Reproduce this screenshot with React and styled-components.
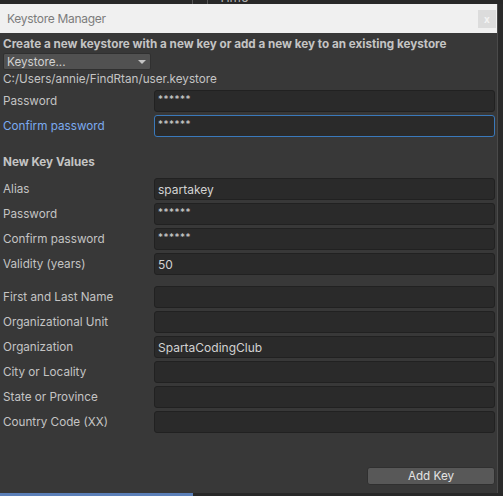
import styled, { createGlobalStyle } from 'styled-components';

const GlobalStyle = createGlobalStyle`
  * { box-sizing: border-box; }
  html, body { margin: 0; padding: 0; background: #282828; }
  body { font-family: Inter, "Noto Sans", sans-serif; }
`;

const Page = styled.div`
  width: 503px;
  height: 496px;
  display: flex;
  flex-direction: column;
  background: #282828;
  overflow: hidden;
`;

const TopStrip = styled.div`
  height: 4px;
  overflow: hidden;
  display: flex;
  align-items: flex-end;
  padding-left: 192px;
  gap: 14px;
`;

const StripLine = styled.span`
  width: 1px;
  height: 4px;
  background: #555;
`;

const StripText = styled.span`
  font-size: 13px;
  line-height: 13px;
  color: #b0b0b0;
  margin-top: -9px;
  margin-left: -4px;
  align-self: flex-start;
`;

const Middle = styled.div`
  flex: 1;
  display: flex;
`;

const Window = styled.div`
  width: 498px;
  display: flex;
  flex-direction: column;
  border-right: 1px solid #4a4a4a;
  background: #383838;
`;

const TitleBar = styled.div`
  height: 29px;
  background: #f0f0f0;
  display: flex;
  align-items: center;
  justify-content: space-between;
  padding: 0 1px 0 7px;
`;

const Title = styled.span`
  font-size: 12px;
  letter-spacing: -0.3px;
  color: #7c7c7c;
`;

const CloseBox = styled.div`
  width: 18px;
  height: 18px;
  background: #dcdcdc;
  color: #f4f4f4;
  font-size: 10px;
  font-weight: 700;
  display: flex;
  align-items: center;
  justify-content: center;
`;

const Body = styled.div`
  flex: 1;
  display: flex;
  flex-direction: column;
  padding: 4px 2px 0 3px;
  color: #c4c4c4;
  font-size: 11.7px;
`;

const Heading = styled.div`
  font-weight: 700;
  line-height: 14px;
  margin-top: ${p => p.$top || 0}px;
  margin-bottom: ${p => p.$bottom || 0}px;
`;

const Dropdown = styled.div`
  width: 148px;
  height: 17px;
  margin-top: 2px;
  background: #515151;
  border: 1px solid #303030;
  border-radius: 2px;
  display: flex;
  align-items: center;
  justify-content: space-between;
  padding: 0 4px 0 3px;
  color: #d2d2d2;
`;

const Caret = styled.span`
  width: 0;
  height: 0;
  border-left: 4px solid transparent;
  border-right: 4px solid transparent;
  border-top: 4px solid #c4c4c4;
`;

const PathText = styled.div`
  line-height: 15px;
  margin-top: 2px;
  margin-bottom: 3px;
  color: #c4c4c4;
`;

const Rows = styled.div`
  display: flex;
  flex-direction: column;
  gap: 3px;
  margin-top: ${p => p.$top || 0}px;
`;

const Row = styled.div`
  display: grid;
  grid-template-columns: 151px 1fr;
  align-items: center;
  height: 22px;
`;

const Label = styled.span`
  color: ${p => (p.$active ? '#7babf0' : '#c4c4c4')};
`;

const Field = styled.div`
  height: 22px;
  background: #2a2a2a;
  border: 1px solid ${p => (p.$active ? '#3a79bb' : '#212121')};
  border-radius: 3px;
  padding: 0 3px;
  display: flex;
  align-items: center;
  color: #d2d2d2;
  font-size: ${p => (p.$secret ? '10px' : '12px')};
  letter-spacing: ${p => (p.$secret ? '0.5px' : '0')};
  padding-bottom: ${p => (p.$secret ? '5px' : '0')};
`;

const Footer = styled.div`
  flex: 1;
  display: flex;
  justify-content: flex-end;
  align-items: flex-end;
  padding-bottom: 8px;
`;

const Button = styled.div`
  width: 128px;
  height: 18px;
  background: #585858;
  border: 1px solid #303030;
  border-radius: 3px;
  color: #e4e4e4;
  display: flex;
  align-items: center;
  justify-content: center;
`;

const Gutter = styled.div`
  flex: 1;
  background: #2a2a2a;
`;

const BottomStrip = styled.div`
  height: 3px;
  display: flex;
`;

const BlueBar = styled.div`
  width: 193px;
  background: #5b7fb8;
`;

const keystoreRows = [
  { label: 'Password', value: '******', secret: true },
  { label: 'Confirm password', value: '******', secret: true, active: true },
];

const keyRows = [
  { label: 'Alias', value: 'spartakey' },
  { label: 'Password', value: '******', secret: true },
  { label: 'Confirm password', value: '******', secret: true },
  { label: 'Validity (years)', value: '50' },
];

const ownerRows = [
  { label: 'First and Last Name', value: '' },
  { label: 'Organizational Unit', value: '' },
  { label: 'Organization', value: 'SpartaCodingClub' },
  { label: 'City or Locality', value: '' },
  { label: 'State or Province', value: '' },
  { label: 'Country Code (XX)', value: '' },
];

function FieldRow({ row }) {
  return (
    <Row>
      <Label $active={row.active}>{row.label}</Label>
      <Field $active={row.active} $secret={row.secret}>{row.value}</Field>
    </Row>
  );
}

function App() {
  return (
    <>
      <GlobalStyle />
      <Page>
        <TopStrip>
          <StripLine />
          <StripLine />
          <StripText>Time</StripText>
        </TopStrip>
        <Middle>
          <Window>
            <TitleBar>
              <Title>Keystore Manager</Title>
              <CloseBox>x</CloseBox>
            </TitleBar>
            <Body>
              <Heading>Create a new keystore with a new key or add a new key to an existing keystore</Heading>
              <Dropdown>
                <span>Keystore...</span>
                <Caret />
              </Dropdown>
              <PathText>C:/Users/annie/FindRtan/user.keystore</PathText>
              <Rows>
                {keystoreRows.map((r, i) => <FieldRow key={i} row={r} />)}
              </Rows>
              <Heading $top={18} $bottom={9}>New Key Values</Heading>
              <Rows>
                {keyRows.map((r, i) => <FieldRow key={i} row={r} />)}
              </Rows>
              <Rows $top={11}>
                {ownerRows.map((r, i) => <FieldRow key={i} row={r} />)}
              </Rows>
              <Footer>
                <Button>Add Key</Button>
              </Footer>
            </Body>
          </Window>
          <Gutter />
        </Middle>
        <BottomStrip>
          <BlueBar />
        </BottomStrip>
      </Page>
    </>
  );
}

export default App;
